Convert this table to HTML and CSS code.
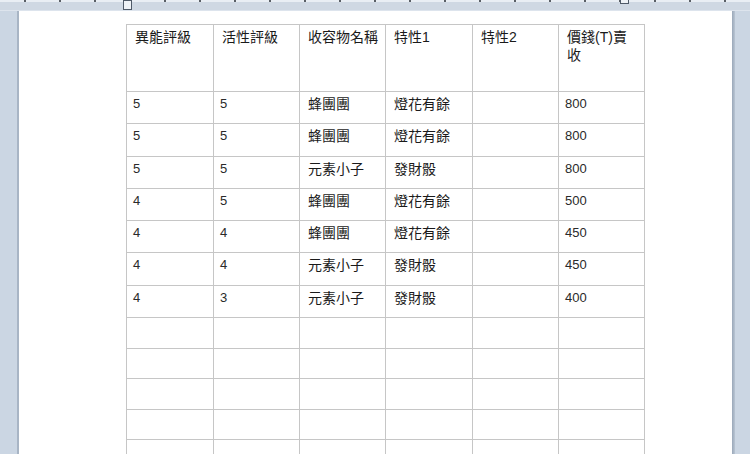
FILE: index.html
```html
<!DOCTYPE html>
<html lang="zh-Hant">
<head>
<meta charset="utf-8">
<title>表格</title>
<link rel="stylesheet" href="styles.css">
</head>
<body>
<div class="ruler">
  <span class="marker marker-left"></span>
  <span class="marker marker-right"></span>
</div>
<div class="workspace">
  <div class="gutter gutter-left"></div>
  <div class="page">
    <table class="grid">
      <colgroup>
        <col class="c1"><col class="c2"><col class="c3"><col class="c4"><col class="c5"><col class="c6">
      </colgroup>
      <tr class="head">
        <td>異能評級</td><td>活性評級</td><td>收容物名稱</td><td>特性1</td><td>特性2</td><td>價錢(T)賣<br>收</td>
      </tr>
      <tr class="data"><td class="num">5</td><td class="num">5</td><td>蜂團團</td><td>燈花有餘</td><td></td><td class="num">800</td></tr>
      <tr class="data"><td class="num">5</td><td class="num">5</td><td>蜂團團</td><td>燈花有餘</td><td></td><td class="num">800</td></tr>
      <tr class="data"><td class="num">5</td><td class="num">5</td><td>元素小子</td><td>發財骰</td><td></td><td class="num">800</td></tr>
      <tr class="data"><td class="num">4</td><td class="num">5</td><td>蜂團團</td><td>燈花有餘</td><td></td><td class="num">500</td></tr>
      <tr class="data"><td class="num">4</td><td class="num">4</td><td>蜂團團</td><td>燈花有餘</td><td></td><td class="num">450</td></tr>
      <tr class="data"><td class="num">4</td><td class="num">4</td><td>元素小子</td><td>發財骰</td><td></td><td class="num">450</td></tr>
      <tr class="data"><td class="num">4</td><td class="num">3</td><td>元素小子</td><td>發財骰</td><td></td><td class="num">400</td></tr>
      <tr class="empty"><td></td><td></td><td></td><td></td><td></td><td></td></tr>
      <tr class="empty"><td></td><td></td><td></td><td></td><td></td><td></td></tr>
      <tr class="empty"><td></td><td></td><td></td><td></td><td></td><td></td></tr>
      <tr class="empty"><td></td><td></td><td></td><td></td><td></td><td></td></tr>
      <tr class="empty"><td></td><td></td><td></td><td></td><td></td><td></td></tr>
    </table>
  </div>
  <div class="gutter gutter-right"></div>
</div>
</body>
</html>
```

FILE: styles.css
```css
html, body {
  margin: 0;
  padding: 0;
  height: 100%;
  overflow: hidden;
}

body {
  background: #cbd6e3;
  font-family: "Liberation Sans", "Noto Sans CJK TC", sans-serif;
  color: #1a1a1a;
}

.ruler {
  position: relative;
  height: 11px;
  background:
    repeating-linear-gradient(90deg, transparent 0 24px, #5a5f66 24px 26px, transparent 26px 35px) 0 0 / 100% 2px no-repeat,
    linear-gradient(#e9eef4 0 2px, #cfd8e3 2px 10px, #dde4ed 10px 11px);
}

.marker {
  position: absolute;
  top: 0;
  width: 7px;
  background: #eef2f6;
  border: 1px solid #4f5a68;
}

.marker-left {
  left: 123px;
  height: 8px;
}

.marker-right {
  left: 620px;
  top: -3px;
  height: 5px;
}

.workspace {
  display: flex;
  height: 443px;
}

.gutter-left {
  width: 17px;
  border-right: 2px solid #a8b5c5;
}

.page {
  width: 713px;
  background: #ffffff;
  padding: 13px 0 0 107px;
  box-sizing: border-box;
}

.gutter-right {
  width: 3px;
  background: linear-gradient(90deg, #9aa8b9, #b9c5d3);
}

.grid {
  border-collapse: collapse;
  table-layout: fixed;
  width: 518px;
}

.c1 { width: 87px; }
.c2 { width: 86px; }
.c3 { width: 86px; }
.c4 { width: 87px; }
.c5 { width: 86px; }
.c6 { width: 86px; }

.grid td {
  border: 1px solid #c6c6c6;
  padding: 3px 6px 0 8px;
  vertical-align: top;
  font-size: 14px;
  line-height: 18px;
}

.grid td.num {
  font-size: 13px;
  padding-left: 6px;
  color: #2a2a2a;
}

.head td {
  height: 67px;
  box-sizing: border-box;
}

.data td {
  height: 32.3px;
  box-sizing: border-box;
}

.empty td {
  height: 30.6px;
  box-sizing: border-box;
}
```
